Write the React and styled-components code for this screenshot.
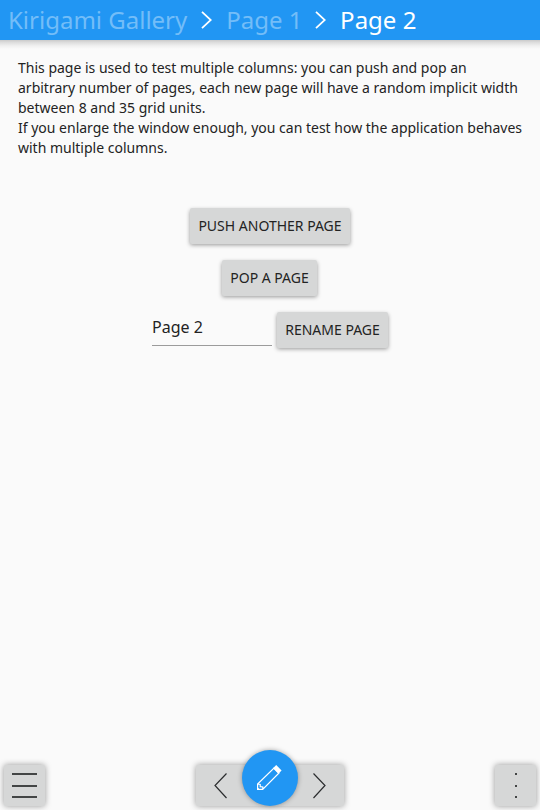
import React from "react";
import styled, { createGlobalStyle } from "styled-components";

const Global = createGlobalStyle`
  * { box-sizing: border-box; }
  body { margin: 0; background: #fafafa; font-family: "Noto Sans", sans-serif; color: #232323; overflow: hidden; }
`;
const Page = styled.div`
  height: 810px; width: 540px; display: flex; flex-direction: column; background: #fafafa;
`;
const Header = styled.header`
  height: 40px; flex: none; display: flex; align-items: center; padding-left: 8px;
  background: #2196f3; font-size: 24px; line-height: 40px; white-space: nowrap;
`;
const HeaderShadow = styled.div`
  height: 9px; flex: none;
  background: linear-gradient(#cacaca, #dcdcdc 25%, #f0f0f0 65%, #fafafa);
`;
const Crumb = styled.span`
  color: ${p => (p.$active ? "#fff" : "#73bdf8")};
`;
const Chevron = styled.svg`
  width: 11px; height: 18px; margin: 0 14px 0 ${p => p.$ml}px; fill: none; stroke: #fff; stroke-width: 1.8;
`;
const Main = styled.main`
  flex: 1; display: flex; flex-direction: column; align-items: center; padding: 9px 18px 0;
`;
const Text = styled.p`
  margin: 0 0 50px; width: 100%; font-size: 14px; line-height: 20px; white-space: pre;
`;
const Button = styled.button`
  height: 36px; width: ${p => p.$w}px; padding: 0 0 1px; border: 0; border-radius: 2px; background: #d6d7d7;
  font: 14px "Noto Sans", sans-serif; color: #232323; white-space: nowrap;
  box-shadow: 0 1.5px 4px -0.5px rgba(0,0,0,.4); margin: 0 ${p => p.$mr || 0}px 16px 0;
`;
const Row = styled.div`
  display: flex; gap: 5px;
`;
const Field = styled.input`
  width: 120px; height: 34px; border: 0; border-bottom: 1px solid #9b9b9b; background: none; padding: 0 0 3px;
  font: 16px "Noto Sans", sans-serif; color: #232323; outline: 0;
`;
const Footer = styled.footer`
  height: 64px; flex: none; display: flex; justify-content: space-between; align-items: flex-end; padding: 0 4px 4px;
`;
const Tool = styled.button`
  width: 41px; height: 41px; padding: 0; border: 0; border-radius: 2px; background: #d6d7d7;
  box-shadow: 0 0 6px rgba(0,0,0,.4);
`;
const Nav = styled.div`
  position: relative; width: 148px; height: 41px; border-radius: 2px; background: #d6d7d7;
  box-shadow: 0 0 6px rgba(0,0,0,.4);
`;
const Icon = styled.svg`
  display: block; fill: none;
`;
const Fab = styled.button`
  position: absolute; left: 46px; top: -15px; width: 56px; height: 56px; border: 0; padding: 0; border-radius: 50%;
  background: #2196f3; box-shadow: 0 0 5px rgba(0,0,0,.35);
`;
export default function App() {
  return (
    <Page>
      <Global />
      <Header>
        <Crumb>Kirigami Gallery</Crumb>
        <Chevron $ml={14} viewBox="0 0 11 18"><path d="M1 .8l8.8 8.2L1 17.2" /></Chevron>
        <Crumb>Page 1</Crumb>
        <Chevron $ml={12.6} viewBox="0 0 11 18"><path d="M1 .8l8.8 8.2L1 17.2" /></Chevron>
        <Crumb $active>Page 2</Crumb>
      </Header>
      <HeaderShadow />
      <Main>
        <Text>{`This page is used to test multiple columns: you can push and pop an
arbitrary number of pages, each new page will have a random implicit width
between 8 and 35 grid units.
If you enlarge the window enough, you can test how the application behaves
with multiple columns.`}</Text>
        <Button $w={160}>PUSH ANOTHER PAGE</Button>
        <Button $w={95} $mr={1}>POP A PAGE</Button>
        <Row>
          <Field defaultValue="Page 2" />
          <Button $w={111}>RENAME PAGE</Button>
        </Row>
      </Main>
      <Footer>
        <Tool aria-label="Menu">
          <Icon width="41" height="41"><path fill="#434545" d="M8 8h25v2H8zM8 20h25v2H8zM8 31h25v2H8z" /></Icon>
        </Tool>
        <Nav>
          <Icon width="148" height="41">
            <path stroke="#2b2d2f" strokeWidth="1.2" d="M30.500 8.500l-11.500 12 11.500 12.500M117.500 8.500l11.500 12-11.500 12.500" />
          </Icon>
          <Fab aria-label="Edit">
            <Icon width="56" height="56">
              <path stroke="#fff" strokeWidth="1.2" d="M15.600 39.400v-5.400L32 18l5 5-16.300 16.400zM15.600 34l2.600.4v2.300l2.600.3v2.400" />
              <path fill="#fff" d="M31 18.200l3.200-3.200 5.400 5.600-3.200 3.200zM15.500 37l2.500 2.900h-2.500z" />
            </Icon>
          </Fab>
        </Nav>
        <Tool aria-label="More">
          <Icon width="41" height="41"><path fill="#434545" d="M20 8h2v2h-2zM20 20h2v2h-2zM20 31h2v2h-2z" /></Icon>
        </Tool>
      </Footer>
    </Page>
  );
}
